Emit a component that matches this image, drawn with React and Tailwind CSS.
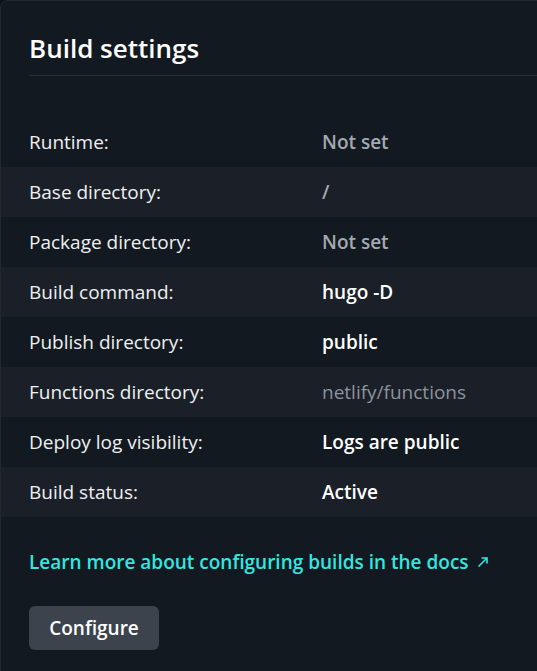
import React from "react";

const rows = [
  { label: "Runtime:", value: "Not set", muted: true },
  { label: "Base directory:", value: "/", muted: true },
  { label: "Package directory:", value: "Not set", muted: true },
  { label: "Build command:", value: "hugo -D" },
  { label: "Publish directory:", value: "public" },
  { label: "Functions directory:", value: "netlify/functions", muted: true, light: true },
  { label: "Deploy log visibility:", value: "Logs are public" },
  { label: "Build status:", value: "Active" },
];

export default function App() {
  return (
    <div
      className="min-h-[671px] w-[537px] overflow-hidden bg-[#0e1217]"
      style={{ fontFamily: '"Open Sans", "Noto Sans", sans-serif' }}
    >
      <div className="min-h-[671px] w-[560px] rounded-tl-lg border-t border-l border-[#22282f] bg-[#131920]">
        {/* header */}
        <div className="pl-[28px] pt-[30px]">
          <h2 className="pb-[10px] text-[26px] font-semibold leading-[34px] text-white border-b border-[#2b313a]">
            Build settings
          </h2>
        </div>

        {/* settings list */}
        <dl className="mt-[41px]">
          {rows.map((row, i) => (
            <div
              key={row.label}
              className={
                "flex h-[50px] items-center pl-[28px] " +
                (i % 2 === 1 ? "bg-[#1b2028]" : "bg-[#131920]")
              }
            >
              <dt className="w-[293px] text-[19px] text-[#eef0f2]">{row.label}</dt>
              <dd
                className={
                  "text-[19px] " +
                  (row.muted
                    ? row.light
                      ? "text-[#8c939c]"
                      : "text-[#a3a9b1] font-semibold"
                    : "text-white font-semibold")
                }
              >
                {row.value}
              </dd>
            </div>
          ))}
        </dl>

        {/* docs link */}
        <div className="pl-[28px] pt-[31px]">
          <a className="flex items-center gap-[7px] text-[19px] font-semibold leading-[28px] text-[#32e6e2]">
            Learn more about configuring builds in the docs
            <svg width="14" height="14" viewBox="0 0 14 14" fill="none" stroke="#32e6e2" strokeWidth="1.6">
              <path d="M2.5 11.5 L11 3" />
              <path d="M5.5 3 H11 V8.5" />
            </svg>
          </a>
        </div>

        {/* button */}
        <div className="pl-[28px] pt-[30px]">
          <button className="h-[44px] w-[130px] rounded-md bg-[#3d434c] text-[19px] font-semibold text-white">
            Configure
          </button>
        </div>
      </div>
    </div>
  );
}
